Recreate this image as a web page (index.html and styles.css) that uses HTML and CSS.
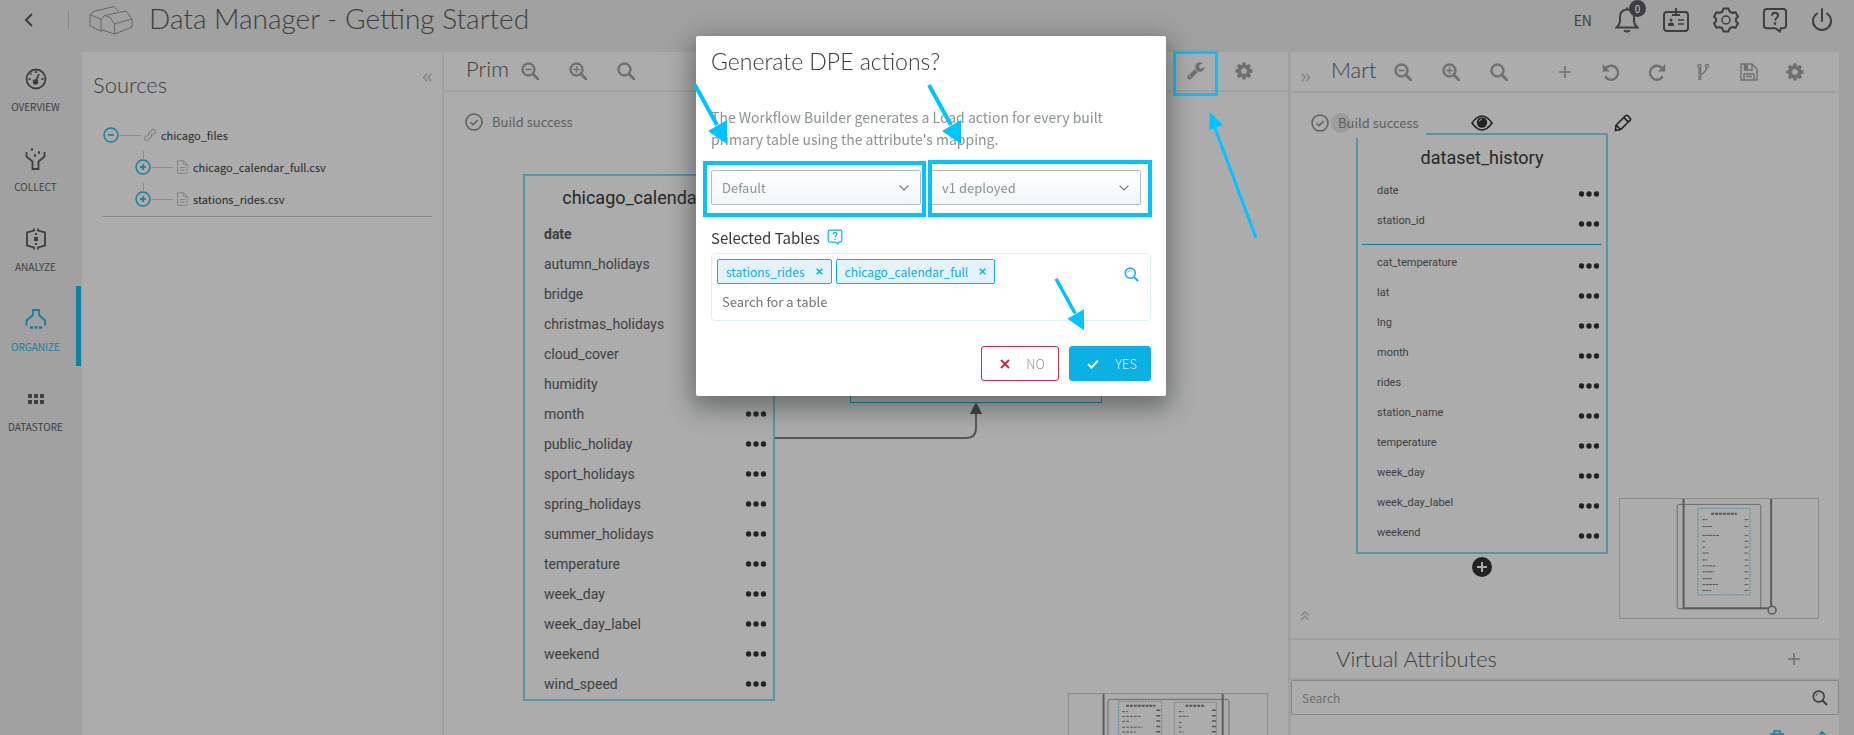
FILE: index.html
```html
<!DOCTYPE html>
<html lang="en">
<head>
<meta charset="utf-8">
<title>Data Manager - Getting Started</title>
<link rel="stylesheet" href="styles.css">
</head>
<body>
<svg class="sprite" aria-hidden="true">
  <symbol id="zoom" viewBox="0 0 18 18"><circle cx="7.5" cy="7.5" r="6" fill="none" stroke="currentColor" stroke-width="2.4"/><path d="M12 12l5 5" stroke="currentColor" stroke-width="3" stroke-linecap="round"/></symbol>
  <symbol id="zoom-out" viewBox="0 0 18 18"><use href="#zoom"/><path d="M4.5 7.5h6" stroke="currentColor" stroke-width="1.6"/></symbol>
  <symbol id="zoom-in" viewBox="0 0 18 18"><use href="#zoom"/><path d="M4.2 7.5h6.6M7.5 4.2v6.6" stroke="currentColor" stroke-width="1.5"/></symbol>
  <symbol id="cog" viewBox="100 100 1600 1600"><path fill="currentColor" d="M1152 896q0-106-75-181t-181-75-181 75-75 181 75 181 181 75 181-75 75-181zm512-109v222q0 12-8 23t-20 13l-185 28q-19 54-39 91 35 50 107 138 10 12 10 25t-9 23q-27 37-99 108t-94 71q-12 0-26-9l-138-108q-44 23-91 38-16 136-29 186-7 28-36 28h-222q-14 0-24.500-8.500t-11.500-21.500l-28-184q-49-16-90-37l-141 107q-10 9-25 9-14 0-25-11-126-114-165-168-7-10-7-23 0-12 8-23 15-21 51-66.500t54-70.500q-27-50-41-99l-183-27q-13-2-21-12.500t-8-23.500v-222q0-12 8-23t19-13l186-28q14-46 39-92-40-57-107-138-10-12-10-24 0-10 9-23 26-36 98.500-107.500t94.500-71.500q13 0 26 10l138 107q44-23 91-38 16-136 29-186 7-28 36-28h222q14 0 24.500 8.500t11.500 21.500l28 184q49 16 90 37l142-107q9-9 24-9 13 0 25 10 129 119 165 170 7 8 7 22 0 12-8 23-15 21-51 66.500t-54 70.500q26 50 41 98l183 28q13 2 21 12.500t8 23.500z"/></symbol>
  <symbol id="wrench" viewBox="64 100 1700 1700"><path fill="currentColor" d="M448 1472q0-26-19-45t-45-19-45 19-19 45 19 45 45 19 45-19 19-45zm644-420l-682 682q-37 37-90 37-52 0-91-37l-106-108q-38-36-38-90 0-53 38-91l681-681q39 98 114.500 173.500t173.500 114.500zm634-435q0 39-23 106-47 134-164.500 217.500t-258.500 83.500q-185 0-316.500-131.500t-131.500-316.500 131.500-316.500 316.500-131.500q58 0 121.500 16.500t107.500 46.500q16 11 16 28t-16 28l-293 169v224l193 107q5-3 79-48.500t135.500-81 70.500-35.500q15 0 23.500 10t8.500 25z"/></symbol>
  <symbol id="plus" viewBox="0 0 18 18"><path d="M9 3v12M3 9h12" stroke="currentColor" stroke-width="1.600"/></symbol>
  <symbol id="redo" viewBox="0 0 18 18"><path d="M14.500 5.500A7 7 0 1 0 14.800 13.500" fill="none" stroke="currentColor" stroke-width="2.400"/><path d="M17.300 1v7.500H10z" fill="currentColor"/></symbol>
  <symbol id="branch" viewBox="0 0 18 18"><g fill="none" stroke="currentColor" stroke-width="1.300"><circle cx="5.500" cy="3" r="1.600"/><circle cx="13" cy="3" r="1.600"/><path d="M5 4.600V17M6.600 17V13q0-1 1-1.800 4.400-2.400 5-6.600M6.600 4.600V11"/></g></symbol>
  <symbol id="save" viewBox="0 0 18 18"><path d="M1 1h11l5 5v11H1zM4.500 1v6h7.500V1M4 17v-6h10v6M6 13.500h6" fill="none" stroke="currentColor" stroke-width="1.400"/><path d="M5 1.500h3v5H5z" fill="currentColor"/></symbol>
  <symbol id="check-circle" viewBox="0 0 18 18"><circle cx="9" cy="9" r="8" fill="none" stroke="currentColor" stroke-width="1.500"/><path d="M5.500 9.200l2.600 2.600 4.600-4.800" fill="none" stroke="currentColor" stroke-width="1.500"/></symbol>
  <symbol id="magnify" viewBox="0 0 16 16"><circle cx="6.700" cy="6.500" r="5.400" fill="none" stroke="currentColor" stroke-width="1.600"/><path d="M3.800 6.300a3 3 0 0 1 2.600-2.700" fill="none" stroke="currentColor" stroke-width="0.800"/><path d="M10.600 10.600l4.400 4.400" stroke="currentColor" stroke-width="2"/></symbol>
  <symbol id="pencil" viewBox="0 0 18 18"><path d="M2 11.200L11.700 1.600q.9-.7 1.800 0l2.700 2.700q.8.900 0 1.800L6.700 15.600 1.400 16.500zM9.900 3.600l4.300 4.300M2 11.200l4.700 4.400" fill="none" stroke="currentColor" stroke-width="1.600"/></symbol>
  <symbol id="dots" viewBox="0 0 20 6"><g fill="currentColor"><circle cx="2.500" cy="3" r="2.700"/><circle cx="10" cy="3" r="2.700"/><circle cx="17.500" cy="3" r="2.700"/></g></symbol>
  <symbol id="minus-node" viewBox="0 0 16 16"><circle cx="8" cy="8" r="7" fill="none" stroke="currentColor" stroke-width="1.400"/><path d="M5 8h6" stroke="currentColor" stroke-width="1.600"/></symbol>
  <symbol id="plus-node" viewBox="0 0 16 16"><use href="#minus-node"/><path d="M8 5v6" stroke="currentColor" stroke-width="1.600"/></symbol>
  <symbol id="file" viewBox="0 0 12 14"><path d="M1.500.700h6l3.500 3.500v9.100H1.500zM7.500.700v3.500H11M3.600 7.500h5.200M3.600 10h5.200" fill="none" stroke="currentColor"/></symbol>
  <symbol id="chevrons" viewBox="0 0 10 9"><path d="M5 .700L1.500 4.500 5 8.300M9.300.700L5.800 4.500l3.500 3.800" fill="none" stroke="currentColor" stroke-width="1.500"/></symbol>
  <symbol id="help" viewBox="0 0 26 27"><path d="M4.500 2h17q3 0 3 3v14q0 3-3 3H19l-1 3.500L13.500 22h-9q-3 0-3-3V5q0-3 3-3z" fill="none" stroke="currentColor" stroke-width="2"/><path d="M9.800 9q0-3 3.200-3t3.200 2.800c0 2.400-3.100 2.600-3.100 5.200" fill="none" stroke="currentColor" stroke-width="2"/><circle cx="13" cy="17.300" r="1.400" fill="currentColor"/></symbol>
  <symbol id="cross" viewBox="0 0 10 10"><path d="M1 1l8 8M9 1L1 9" stroke="currentColor" stroke-width="2"/></symbol>
  <symbol id="caret" viewBox="0 0 10 6"><path d="M.6.600L5 5 9.400.600" fill="none" stroke="currentColor" stroke-width="1.200"/></symbol>
  <symbol id="arrow" viewBox="0 0 36 62"><path d="M2 2l22 40" stroke="currentColor" stroke-width="4"/><path d="M15 48l19-11v24z" fill="currentColor"/></symbol>
</svg>

<header class="topbar">
  <button class="icon-btn back" aria-label="Back"><svg width="9" height="14" viewBox="0 0 9 14"><path d="M8 1L2 7l6 6" fill="none" stroke="currentColor" stroke-width="2"/></svg></button>
  <span class="topbar-rule"></span>
  <svg class="brand" width="44" height="30" viewBox="0 0 44 30" fill="none" stroke="currentColor" stroke-linejoin="round"><path d="M1 9.500L12 14.500M1 9.500L4.500 6.500 25 1.500l4.500 4.500M1 9.500V21l12 5.500M12 14.500V26M12 14.500L15.500 10.500 37 6l6 8v8L25.500 29 13 25M15.500 10.500L21 12.500 25.500 19 43 14M25.500 19v10"/></svg>
  <h1 class="app-title">Data Manager - Getting Started</h1>
  <nav class="tools" aria-label="Account">
    <button class="lang">EN</button>
    <button class="icon-btn bell" aria-label="Notifications"><svg width="24" height="26" viewBox="0 0 24 26" fill="none" stroke="currentColor" stroke-width="2"><path d="M1.500 20.500q3.500-3 3.500-7V10q0-7 7-7.500T19 10v3.500q0 4 3.500 7zM9 23.500q3 2 6 0M12 .500v2"/></svg><span class="badge">0</span></button>
    <button class="icon-btn" aria-label="Profile"><svg width="28" height="26" viewBox="0 0 28 26" fill="none" stroke="currentColor" stroke-width="2"><rect x="2" y="5" width="24" height="19" rx="3"/><path d="M14 1v7M10 8h8" /><path d="M16 13h6M16 17h6" stroke-width="1.500"/><circle cx="9" cy="13" r="1.500" fill="currentColor" stroke="none"/><path d="M6 19v-2.500q3-2 6 0V19z" fill="currentColor" stroke="none"/></svg></button>
    <button class="icon-btn" aria-label="Settings"><svg width="26" height="26" viewBox="0 0 26 26" fill="none" stroke="currentColor" stroke-width="2"><path d="M10.500 1.500h5l1 3 3 1.500 3-.8 2.500 4.300-2 2.200v2.600l2 2.200-2.500 4.300-3-.8-3 1.500-1 3h-5l-1-3-3-1.500-3 .8L1 16.500l2-2.200v-2.600L1 9.500l2.500-4.300 3 .8 3-1.500z" stroke-linejoin="round"/><circle cx="13" cy="13" r="4" stroke-width="1.500"/></svg></button>
    <button class="icon-btn" aria-label="Help"><svg width="26" height="26"><use href="#help"/></svg></button>
    <button class="icon-btn" aria-label="Log out"><svg width="22" height="24" viewBox="0 0 22 24" fill="none" stroke="currentColor" stroke-width="2"><path d="M11 1v12M6 5.500a9 9 0 1 0 10 0" stroke-linecap="round"/></svg></button>
  </nav>
</header>

<div class="shell">
  <nav class="sidebar" aria-label="Main">
    <a class="nav-item" href="#overview"><svg width="22" height="22" viewBox="0 0 22 22" fill="none" stroke="currentColor" stroke-width="1.800"><circle cx="11" cy="11" r="9.500"/><circle cx="10.500" cy="14" r="1.800" fill="currentColor"/><path d="M11 13l3-7M11 3v2M3.500 11h2M16.500 11h2M5.500 5.500l1 1"/></svg><span>OVERVIEW</span></a>
    <a class="nav-item" href="#collect"><svg width="22" height="22" viewBox="0 0 22 22" fill="none" stroke="currentColor" stroke-width="1.800"><path d="M1.500 4v4.500l6 5V21h6v-7.500l6-5V4"/><path d="M6 1.500h2M13 4.500h2M9 7.500h2" stroke-width="2.500"/></svg><span>COLLECT</span></a>
    <a class="nav-item" href="#analyze"><svg width="22" height="22" viewBox="0 0 22 22" fill="none" stroke="currentColor" stroke-width="1.800"><path d="M9 .500v2L2 4.500v13l7 2v2M13 .500v2l7 2v13l-7 2v2"/><path d="M11 5v2M11 15v2" stroke-width="2"/><path d="M9 11h4" stroke-width="4"/></svg><span>ANALYZE</span></a>
    <a class="nav-item active" href="#organize"><svg width="22" height="22" viewBox="0 0 22 22" fill="none" stroke="currentColor" stroke-width="1.800"><path d="M1.500 17.500v-5L8 7V2h6v5l6 5.500v5"/><path d="M5 19.500h3M9.500 19.500h3M14 19.500h3" stroke-width="2.500"/></svg><span>ORGANIZE</span></a>
    <a class="nav-item" href="#datastore"><svg width="22" height="22" viewBox="0 0 22 22" fill="currentColor"><path d="M3 6h4v4H3zM9 6h4v4H9zM15 6h4v4h-4zM3 12h4v4H3zM9 12h4v4H9zM15 12h4v4h-4z"/></svg><span>DATASTORE</span></a>
  </nav>

  <section class="pane sources">
    <div class="sources-head">
      <h2 class="pane-title">Sources</h2>
      <button class="icon-btn faint" aria-label="Collapse"><svg width="10" height="9"><use href="#chevrons"/></svg></button>
    </div>
    <ul class="tree">
      <li class="tree-row"><button class="icon-btn node" aria-label="Collapse chicago_files"><svg width="16" height="16"><use href="#minus-node"/></svg></button><span class="branch-line"></span><svg class="kind" width="14" height="14" viewBox="0 0 14 14" fill="none" stroke="currentColor" stroke-width="1.200"><path d="M6 8q-1.500-1.500 0-3l3-3q1.500-1.200 3 0 1.200 1.500 0 3L10 7M8 6q1.500 1.500 0 3l-3 3q-1.500 1.200-3 0-1.200-1.500 0-3L4 7"/></svg><span>chicago_files</span></li>
      <li class="tree-row child"><button class="icon-btn node" aria-label="Expand chicago_calendar_full.csv"><svg width="16" height="16"><use href="#plus-node"/></svg></button><span class="branch-line"></span><svg class="kind" width="14" height="14"><use href="#file"/></svg><span>chicago_calendar_full.csv</span></li>
      <li class="tree-row child"><button class="icon-btn node" aria-label="Expand stations_rides.csv"><svg width="16" height="16"><use href="#plus-node"/></svg></button><span class="branch-line"></span><svg class="kind" width="14" height="14"><use href="#file"/></svg><span>stations_rides.csv</span></li>
    </ul>
  </section>

  <section class="pane prim">
    <div class="pane-head">
      <h2 class="pane-title short">Prim</h2>
      <div class="zoom-group">
        <button class="icon-btn" aria-label="Zoom out"><svg width="18" height="18"><use href="#zoom-out"/></svg></button>
        <button class="icon-btn" aria-label="Zoom in"><svg width="18" height="18"><use href="#zoom-in"/></svg></button>
        <button class="icon-btn" aria-label="Fit"><svg width="18" height="18"><use href="#zoom"/></svg></button>
      </div>
      <div class="action-group">
        <button class="icon-btn marked" aria-label="Build"><svg width="18" height="18"><use href="#wrench"/></svg></button>
        <button class="icon-btn" aria-label="Options"><svg width="18" height="18"><use href="#cog"/></svg></button>
      </div>
    </div>
    <div class="canvas">
      <p class="status"><svg width="18" height="18"><use href="#check-circle"/></svg>Build success</p>
      <article class="entity calendar">
        <h3>chicago_calendar_full</h3>
        <ul>
          <li><b>date</b><button class="icon-btn more" aria-label="More"><svg width="20" height="6"><use href="#dots"/></svg></button></li>
          <li>autumn_holidays<button class="icon-btn more" aria-label="More"><svg width="20" height="6"><use href="#dots"/></svg></button></li>
          <li>bridge<button class="icon-btn more" aria-label="More"><svg width="20" height="6"><use href="#dots"/></svg></button></li>
          <li>christmas_holidays<button class="icon-btn more" aria-label="More"><svg width="20" height="6"><use href="#dots"/></svg></button></li>
          <li>cloud_cover<button class="icon-btn more" aria-label="More"><svg width="20" height="6"><use href="#dots"/></svg></button></li>
          <li>humidity<button class="icon-btn more" aria-label="More"><svg width="20" height="6"><use href="#dots"/></svg></button></li>
          <li>month<button class="icon-btn more" aria-label="More"><svg width="20" height="6"><use href="#dots"/></svg></button></li>
          <li>public_holiday<button class="icon-btn more" aria-label="More"><svg width="20" height="6"><use href="#dots"/></svg></button></li>
          <li>sport_holidays<button class="icon-btn more" aria-label="More"><svg width="20" height="6"><use href="#dots"/></svg></button></li>
          <li>spring_holidays<button class="icon-btn more" aria-label="More"><svg width="20" height="6"><use href="#dots"/></svg></button></li>
          <li>summer_holidays<button class="icon-btn more" aria-label="More"><svg width="20" height="6"><use href="#dots"/></svg></button></li>
          <li>temperature<button class="icon-btn more" aria-label="More"><svg width="20" height="6"><use href="#dots"/></svg></button></li>
          <li>week_day<button class="icon-btn more" aria-label="More"><svg width="20" height="6"><use href="#dots"/></svg></button></li>
          <li>week_day_label<button class="icon-btn more" aria-label="More"><svg width="20" height="6"><use href="#dots"/></svg></button></li>
          <li>weekend<button class="icon-btn more" aria-label="More"><svg width="20" height="6"><use href="#dots"/></svg></button></li>
          <li>wind_speed<button class="icon-btn more" aria-label="More"><svg width="20" height="6"><use href="#dots"/></svg></button></li>
        </ul>
      </article>
      <div class="entity rides"></div>
      <svg class="link" width="210" height="40" viewBox="0 0 210 40"><path d="M0 36h191q10 0 10-10V10" fill="none" stroke="#555a54" stroke-width="2"/><path d="M201 0l6 12h-12z" fill="#3d3e40"/></svg>
      <svg class="minimap prim-map" width="200" height="42" viewBox="0 0 200 42" fill="none"><rect x="38.500" y="5.500" width="124" height="60" rx="2" stroke="#6b6b6b"/><rect x="49.500" y="7.500" width="44" height="60" stroke="#4f8fa3" stroke-dasharray="2 1"/><rect x="106.500" y="8.500" width="43" height="60" stroke="#8e8e8e"/><path d="M57 12h30M118 12h20" stroke="#555" stroke-width="2" stroke-dasharray="3 1"/><path d="M53 18h6M53 23h19M53 28h7M53 34h21M53 39h14M111 18h5M111 23h10M111 29h3M111 34h3M111 39h5" stroke="#555" stroke-dasharray="3 1"/><path d="M90 16v26M147 16v26" stroke="#555" stroke-width="4" stroke-dasharray="1.500 4"/><path d="M34 0v42M156 0v42" stroke="#575d57" stroke-width="2"/></svg>
    </div>
    <svg class="pointer-up" width="54" height="130" viewBox="0 0 54 130" aria-hidden="true"><path d="M52 128L11 18" stroke="#00c3ff" stroke-width="3"/><path d="M6 2l13 13-14 5z" fill="#00c3ff"/></svg>
  </section>

  <section class="pane mart">
    <div class="pane-head">
      <button class="icon-btn faint expand" aria-label="Expand"><svg width="10" height="9"><use href="#chevrons"/></svg></button>
      <h2 class="pane-title short">Mart</h2>
      <div class="zoom-group">
        <button class="icon-btn" aria-label="Zoom out"><svg width="18" height="18"><use href="#zoom-out"/></svg></button>
        <button class="icon-btn" aria-label="Zoom in"><svg width="18" height="18"><use href="#zoom-in"/></svg></button>
        <button class="icon-btn" aria-label="Fit"><svg width="18" height="18"><use href="#zoom"/></svg></button>
      </div>
      <div class="action-group">
        <button class="icon-btn" aria-label="Add"><svg width="18" height="18"><use href="#plus"/></svg></button>
        <button class="icon-btn flip" aria-label="Undo"><svg width="18" height="18"><use href="#redo"/></svg></button>
        <button class="icon-btn" aria-label="Redo"><svg width="18" height="18"><use href="#redo"/></svg></button>
        <button class="icon-btn" aria-label="Branch"><svg width="18" height="18"><use href="#branch"/></svg></button>
        <button class="icon-btn" aria-label="Save"><svg width="18" height="18"><use href="#save"/></svg></button>
        <button class="icon-btn" aria-label="Options"><svg width="18" height="18"><use href="#cog"/></svg></button>
      </div>
    </div>
    <div class="canvas">
      <article class="entity history">
        <h3>dataset_history</h3>
        <ul class="keys">
          <li>date<button class="icon-btn more" aria-label="More"><svg width="20" height="6"><use href="#dots"/></svg></button></li>
          <li>station_id<button class="icon-btn more" aria-label="More"><svg width="20" height="6"><use href="#dots"/></svg></button></li>
        </ul>
        <ul class="fields">
          <li>cat_temperature<button class="icon-btn more" aria-label="More"><svg width="20" height="6"><use href="#dots"/></svg></button></li>
          <li>lat<button class="icon-btn more" aria-label="More"><svg width="20" height="6"><use href="#dots"/></svg></button></li>
          <li>lng<button class="icon-btn more" aria-label="More"><svg width="20" height="6"><use href="#dots"/></svg></button></li>
          <li>month<button class="icon-btn more" aria-label="More"><svg width="20" height="6"><use href="#dots"/></svg></button></li>
          <li>rides<button class="icon-btn more" aria-label="More"><svg width="20" height="6"><use href="#dots"/></svg></button></li>
          <li>station_name<button class="icon-btn more" aria-label="More"><svg width="20" height="6"><use href="#dots"/></svg></button></li>
          <li>temperature<button class="icon-btn more" aria-label="More"><svg width="20" height="6"><use href="#dots"/></svg></button></li>
          <li>week_day<button class="icon-btn more" aria-label="More"><svg width="20" height="6"><use href="#dots"/></svg></button></li>
          <li>week_day_label<button class="icon-btn more" aria-label="More"><svg width="20" height="6"><use href="#dots"/></svg></button></li>
          <li>weekend<button class="icon-btn more" aria-label="More"><svg width="20" height="6"><use href="#dots"/></svg></button></li>
        </ul>
      </article>
      <p class="status"><svg width="18" height="18"><use href="#check-circle"/></svg><span class="halo">Build success</span></p>
      <button class="icon-btn view" aria-label="View"><svg width="22" height="16" viewBox="0 0 22 16"><path d="M1 8q10-14 20 0-10 14-20 0z" fill="none" stroke="currentColor" stroke-width="1.600"/><circle cx="11" cy="7.500" r="5.200" fill="currentColor"/><path d="M8.300 6.500q.5-2 2.500-2.300" fill="none" stroke="#acacac"/></svg></button>
      <button class="icon-btn edit" aria-label="Edit"><svg width="18" height="18"><use href="#pencil"/></svg></button>
      <button class="icon-btn add" aria-label="Add attribute"><svg width="20" height="20" viewBox="0 0 20 20"><circle cx="10" cy="10" r="10" fill="currentColor"/><path d="M10 5v10M5 10h10" stroke="#acacac" stroke-width="2"/></svg></button>
      <svg class="minimap mart-map" width="200" height="121" viewBox="0 0 200 121" fill="none"><rect x="57.500" y="5.500" width="85" height="106" rx="2" stroke="#6b6b6b"/><rect x="78.500" y="9.500" width="53" height="88" stroke="#4f8fa3" stroke-dasharray="2 1"/><path d="M92 15h26" stroke="#555" stroke-width="2" stroke-dasharray="3 1"/><path d="M83 21h5M83 28h10M83 37h17M83 43h3M83 49h3M83 55h7M83 62h5M83 68h14M83 74h12M83 81h10M83 87h16M83 93h9M126 21h4M126 28h4M126 37h4M126 43h4M126 49h4M126 55h4M126 62h4M126 68h4M126 74h4M126 81h4M126 87h4M126 93h4" stroke="#555" stroke-dasharray="3 .5"/><path d="M64 0v111h89V0" stroke="#575d57" stroke-width="2"/><circle cx="154" cy="113" r="4" stroke="#575d57" stroke-width="1.500" fill="#acacac"/></svg>
      <button class="icon-btn faint raise" aria-label="Raise"><svg width="10" height="9"><use href="#chevrons"/></svg></button>
    </div>
    <div class="virtual-head">
      <h2 class="pane-title">Virtual Attributes</h2>
      <button class="icon-btn" aria-label="Add virtual attribute"><svg width="18" height="18"><use href="#plus"/></svg></button>
    </div>
    <label class="search"><input type="search" placeholder="Search" aria-label="Search virtual attributes"><svg width="16" height="16"><use href="#magnify"/></svg></label>
    <div class="virtual-row">
      <button class="icon-btn" aria-label="Delete"><svg width="14" height="16" viewBox="0 0 14 16" fill="none" stroke="currentColor" stroke-width="1.600"><path d="M0 4h14M4 4V1h6v3M2 4v11h10V4"/></svg></button>
      <button class="icon-btn" aria-label="Edit attribute"><svg width="14" height="16" viewBox="0 0 14 16" fill="none" stroke="currentColor" stroke-width="1.600"><path d="M2 9l6-7 4 4-6 8"/></svg></button>
    </div>
  </section>
</div>

<div class="modal-layer">
  <form class="modal" role="dialog" aria-labelledby="modal-title">
    <h2 class="modal-title" id="modal-title">Generate DPE actions?</h2>
    <p class="modal-text">The Workflow Builder generates a Load action for every built primary table using the attribute's mapping.</p>
    <div class="selects">
      <div class="select-wrap first"><select aria-label="Environment"><option>Default</option></select><svg width="10" height="6"><use href="#caret"/></svg></div>
      <div class="select-wrap second"><select aria-label="Version"><option>v1 deployed</option></select><svg width="10" height="6"><use href="#caret"/></svg></div>
    </div>
    <label class="field-label" for="table-search">Selected Tables <svg width="16" height="16"><use href="#help"/></svg></label>
    <div class="picker">
      <div class="tags">
        <span class="tag">stations_rides<button type="button" class="icon-btn" aria-label="Remove stations_rides"><svg width="7" height="7"><use href="#cross"/></svg></button></span>
        <span class="tag">chicago_calendar_full<button type="button" class="icon-btn" aria-label="Remove chicago_calendar_full"><svg width="7" height="7"><use href="#cross"/></svg></button></span>
        <svg class="picker-search" width="15" height="15"><use href="#magnify"/></svg>
      </div>
      <input id="table-search" type="text" placeholder="Search for a table">
    </div>
    <div class="modal-actions">
      <button type="button" class="btn no"><svg width="10" height="10"><use href="#cross"/></svg>NO</button>
      <button type="submit" class="btn yes"><svg width="12" height="10" viewBox="0 0 12 10"><path d="M1 5l3.500 3.500L11 1.500" fill="none" stroke="#fff" stroke-width="2"/></svg>YES</button>
    </div>
    <svg class="pointer p1" width="36" height="62" aria-hidden="true"><use href="#arrow"/></svg>
    <svg class="pointer p2" width="36" height="62" aria-hidden="true"><use href="#arrow"/></svg>
    <svg class="pointer p3" width="36" height="54" aria-hidden="true"><use href="#arrow"/></svg>
  </form>
</div>
</body>
</html>
```

FILE: styles.css
```css
:root {
  --back: #a1a1a1;
  --pane: #acacac;
  --ink: #3d3e40;
  --muted: #6f7070;
  --teal: #147f9f;
  --frame: #5a93a6;
  --mark: #00c3ff;
  --ui: "Noto Sans CJK SC", "Noto Sans", sans-serif;
  --head: Lato, sans-serif;
}
* { box-sizing: border-box; }
body {
  margin: 0;
  height: 100vh;
  overflow: hidden;
  display: flex;
  flex-direction: column;
  background: var(--back);
  color: var(--ink);
  font: 13px/20px var(--ui);
}
h1, h2, h3, p, ul { margin: 0; padding: 0; font-weight: 400; }
ul { list-style: none; }
svg { display: block; flex: none; }
.sprite { position: absolute; width: 0; height: 0; }
button, input, select { font: inherit; color: inherit; }
.icon-btn { display: block; padding: 0; border: 0; background: none; color: inherit; }
.faint { color: #868686; }

.topbar { display: flex; align-items: center; height: 46px; padding: 0 21px 6px 24px; flex: none; }
.topbar-rule { width: 1px; height: 18px; margin: 0 20px 0 35px; background: #858585; }
.brand { color: #666; }
.app-title { margin: 0 0 4px 16px; font: 300 28px/34px var(--head); }
.tools { display: flex; align-items: center; gap: 23px; margin-left: auto; }
.lang { padding: 0; border: 0; background: none; font-size: 14px; }
.bell { position: relative; }
.badge { position: absolute; left: 14px; top: -7px; width: 17px; height: 17px; border-radius: 50%; background: var(--ink); color: #c8c8c8; font-size: 10px; line-height: 17px; }

.shell { flex: 1; min-height: 0; display: grid; grid-template-columns: 82px 360px minmax(0, 1fr) 548px; padding-right: 15px; }
.sidebar { display: flex; flex-direction: column; }
.nav-item { height: 80px; margin-right: 1px; padding: 22px 5px 0 0; border-right: 5px solid transparent; display: flex; flex-direction: column; align-items: center; gap: 9px; color: inherit; text-decoration: none; font-size: 10px; line-height: 16px; }
.nav-item.active { color: var(--teal); border-color: var(--teal); }

.pane { margin-top: 6px; background: var(--pane); min-width: 0; display: flex; flex-direction: column; }
.pane-title { font: 300 22px/36px var(--head); }
.sources { padding: 15px 10px 0 11px; }
.sources-head { display: flex; justify-content: space-between; }
.sources-head .icon-btn { align-self: flex-start; margin-top: 6px; }
.tree { margin: 16px 0 0 9px; padding: 0 0 1px 1px; border-bottom: 1px solid #898989; font-size: 11px; color: #262829; }
.tree-row { position: relative; display: flex; align-items: center; height: 32px; }
.tree-row.child { padding-left: 32px; }
.tree-row.child::before { content: ""; position: absolute; left: 40px; top: 0; width: 1px; height: 9px; background: #8c8c8c; }
.node { color: var(--teal); }
.branch-line { width: 22px; height: 1px; margin-right: 2px; background: #8c8c8c; }
.kind { margin-right: 4px; color: #858585; }

.prim { position: relative; margin-left: 2px; margin-right: 3px; }
.pane-head { display: flex; align-items: center; flex: none; height: 40px; border-bottom: 2px solid #a1a1a1; padding: 0 35px 0 22px; }
.pane-head .pane-title { margin-bottom: 4px; }
.short { min-width: 55px; }
.zoom-group, .action-group { display: flex; align-items: center; gap: 30px; color: var(--muted); }
.action-group { margin-left: auto; }
.marked { position: relative; }
.marked::after { content: ""; position: absolute; inset: -11px -13px -16px -14px; border: 3px solid var(--mark); }
.canvas { position: relative; flex: 1; min-height: 0; overflow: hidden; }
.status { position: absolute; left: 21px; top: 17px; display: flex; align-items: center; gap: 9px; height: 26px; color: #5d5f5b; font-size: 13px; }
.entity { position: absolute; width: 252px; border: 2px solid var(--frame); font: 14px/30px Roboto, sans-serif; color: var(--ink); }
.entity h3 { font: 18px/43px Roboto, sans-serif; text-align: center; color: #252627; }
.entity li { display: flex; justify-content: space-between; align-items: center; height: 30px; padding: 0 7px 0 19px; }
.more { color: #222; }
.calendar { left: 79px; top: 82px; }
.rides { left: 406px; top: 82px; height: 229px; border-width: 1px; border-color: var(--teal); }
.link { position: absolute; left: 331px; top: 310px; }
.minimap { position: absolute; border: 1px solid #8b8b8b; }
.prim-map { right: 20px; bottom: 0; border-bottom: 0; }
.pointer-up { position: absolute; right: 30px; top: 58px; z-index: 3; }

.mart { padding-top: 1px; }
.mart .pane-head { padding-left: 10px; }
.expand { transform: scaleX(-1); margin: 10px 20px 0 0; }
.mart .short { min-width: 63px; }
.mart .action-group { gap: 28px; }
.flip { transform: scaleX(-1); }
.history { left: 65px; top: 40px; font-size: 11px; }
.history h3 { line-height: 36px; padding-top: 5px; }
.history .more { margin-top: 6px; }
.keys { margin: 0 4px 3px; padding-bottom: 8px; border-bottom: 1px solid var(--teal); }
.fields { padding-bottom: 4px; }
.history .keys li { padding: 0 3px 0 15px; }
.mart .status { background: var(--pane); left: 20px; top: 15px; width: 115px; height: 30px; }
.halo { position: relative; z-index: 0; white-space: nowrap; }
.halo::before { content: ""; position: absolute; z-index: -1; left: -7px; top: 0; width: 20px; height: 20px; border-radius: 50%; background: #9d9d9d; }
.view { position: absolute; left: 180px; top: 22px; color: #222; }
.edit { position: absolute; left: 323px; top: 21px; color: #222; }
.add { position: absolute; left: 181px; top: 464px; color: #222; }
.mart-map { right: 20px; top: 405px; }
.raise { position: absolute; left: 9px; bottom: 18px; transform: rotate(90deg); }
.virtual-head { display: flex; align-items: center; justify-content: space-between; flex: none; height: 42px; padding: 0 36px 0 45px; border: solid #a1a1a1; border-width: 2px 0; color: var(--ink); }
.virtual-head .icon-btn { color: var(--muted); }
.search { display: flex; align-items: center; flex: none; height: 35px; padding: 0 10px; border: 1px solid #888; border-radius: 2px; }
.search input { flex: 1; min-width: 0; padding: 0; border: 0; outline: 0; background: none; font-size: 12px; }
.search input::placeholder { color: #6c6e6e; opacity: 1; }
.virtual-row { display: flex; justify-content: flex-end; gap: 30px; flex: none; height: 20px; padding: 15px 11px 0 0; overflow: hidden; color: var(--teal); }

.modal-layer { position: fixed; inset: 0; display: flex; justify-content: center; align-items: flex-start; padding: 36px 0 0 8px; pointer-events: none; z-index: 2; }
.modal { position: relative; width: 470px; padding: 8px 15px 15px; border-radius: 2px; background: #fff; color: #333a3d; box-shadow: 0 8px 26px 4px rgba(40, 48, 46, 0.5); pointer-events: auto; }
.modal-title { font: 300 23px/34px var(--head); }
.modal-text { margin: 28px 0 20px; font-size: 14px; line-height: 22px; color: #8c9393; }
.selects { display: grid; grid-template-columns: 210px 210px; gap: 10px; }
.select-wrap { position: relative; }
.select-wrap select { display: block; width: 100%; height: 35px; padding: 0 10px; appearance: none; border: 1px solid #b5bcbd; border-radius: 2px; background: linear-gradient(#fff, #eef8fa); color: #8c9393; font-size: 13px; }
.select-wrap svg { position: absolute; right: 12px; top: 15px; color: #6c7475; }
.select-wrap::after { content: ""; position: absolute; border: 4px solid var(--mark); pointer-events: none; }
.first::after { inset: -9px -5px -12px -8px; }
.second::after { inset: -10px -11px -12px -3px; }
.field-label { display: flex; align-items: center; gap: 7px; height: 22px; margin: 22px 0 4px; font-size: 15px; }
.field-label svg { color: #0bb0e5; margin-bottom: 3px; }
.picker { height: 68px; border: 1px solid #dff0f5; border-radius: 4px; padding: 5px 10px 0 5px; }
.tags { display: flex; gap: 4px; }
.tag { display: flex; align-items: center; gap: 11px; height: 25px; padding: 0 8px; border: 1px solid #0bb0e5; border-radius: 2px; background: #e4f3f8; color: #0bb0e5; font-size: 12px; }
.picker-search { margin: 8px 1px 0 auto; color: #0bb0e5; }
.picker input { display: block; width: 100%; height: 34px; padding: 0 5px; border: 0; outline: 0; background: none; font-size: 13px; }
.picker input::placeholder { color: #6d7676; opacity: 1; }
.modal-actions { display: flex; justify-content: flex-end; gap: 10px; margin-top: 25px; }
.btn { display: flex; align-items: center; justify-content: flex-end; gap: 16px; height: 35px; padding: 0 13px; border-radius: 3px; font-weight: 300; font-size: 13px; }
.no { width: 78px; border: 1px solid #cc2b4f; background: #fff; color: #8c9393; }
.no svg { color: #cc2b4f; }
.yes { width: 82px; border: 1px solid #0bb0e5; background: #0bb0e5; color: #d5f3fc; }
.pointer { position: absolute; color: var(--mark); z-index: 3; }
.p1 { left: -3px; top: 47px; }
.p2 { left: 231px; top: 47px; }
.p3 { left: 356px; top: 241px; }
```
